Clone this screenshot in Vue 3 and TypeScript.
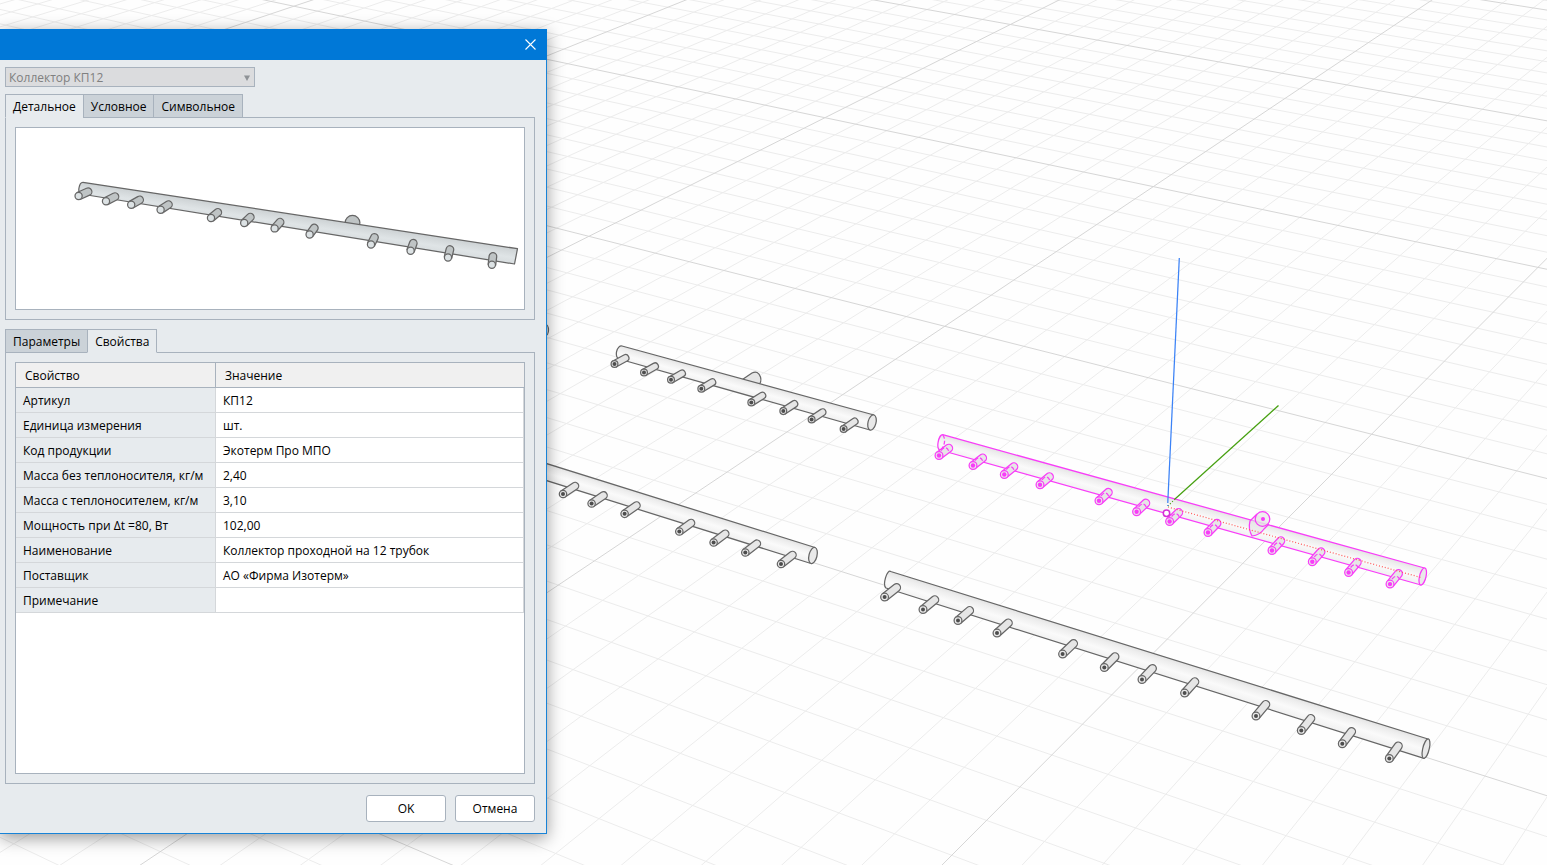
<script setup lang="ts">
import { ref } from 'vue'

type Point = [number, number]

interface Manifold {
  id: string
  topLeft: Point
  topRight: Point
  bottomRight: Point
  bottomLeft: Point
  capWidth: number
  radius: number
  firstOffset: Point
  lastOffset: Point
  tips: Point[]
}

interface Stub {
  x: number
  y: number
  d: string
}

/* Ground plane: the homography of a square patch of two major cells a side. */
function project(u: number, v: number): Point {
  const w = 1 - 0.1462 * u - 0.2404 * v
  return [(825 + 488.1 * u - 613.8 * v) / w, (117.7 + 110.6 * u + 180.5 * v) / w]
}

function gridPaths() {
  let minor = ''
  let major = ''
  const add = (i: number, a: Point, b: Point) => {
    const d = `M${a[0].toFixed(1)} ${a[1].toFixed(1)}L${b[0].toFixed(1)} ${b[1].toFixed(1)}`
    if (i % 10 === 0) major += d
    else minor += d
  }
  for (let i = -30; i <= 29; i++) add(i, project(i / 20, -1.2), project(i / 20, 1.9))
  for (let i = -24; i <= 36; i++) add(i, project(-1.6, i / 20), project(1.6, i / 20))
  return { minor, major }
}

const grid = gridPaths()

function bodyPath(m: Manifold): string {
  const half = Math.hypot(m.topLeft[0] - m.bottomLeft[0], m.topLeft[1] - m.bottomLeft[1]) / 2
  return `M${m.topLeft} L${m.topRight} L${m.bottomRight} L${m.bottomLeft} A${m.capWidth} ${half} 12 0 1 ${m.topLeft} Z`
}

function capPath(m: Manifold): string {
  const half = Math.hypot(m.topRight[0] - m.bottomRight[0], m.topRight[1] - m.bottomRight[1]) / 2
  const arc = `A${m.capWidth} ${half} 14 1 1`
  return `M${m.topRight} ${arc} ${m.bottomRight} ${arc} ${m.topRight}`
}

function stubs(m: Manifold): Stub[] {
  const start = m.tips[0][0]
  const span = m.tips[m.tips.length - 1][0] - start
  return m.tips.map(([x, y]) => {
    const t = (x - start) / span
    const ox = m.firstOffset[0] + (m.lastOffset[0] - m.firstOffset[0]) * t
    const oy = m.firstOffset[1] + (m.lastOffset[1] - m.firstOffset[1]) * t
    const len = Math.hypot(ox, oy)
    const nx = (oy / len) * m.radius
    const ny = (-ox / len) * m.radius
    const r = m.radius
    const d =
      `M${x + nx} ${y + ny}L${x + ox + nx} ${y + oy + ny}` +
      `A${r} ${r} 0 0 1 ${x + ox - nx} ${y + oy - ny}L${x - nx} ${y - ny}Z`
    return { x, y, d }
  })
}

/* Gradient axis across the pipe, from its upper edge to its lower edge. */
function axis(m: Manifold) {
  const dx = m.topRight[0] - m.topLeft[0]
  const dy = m.topRight[1] - m.topLeft[1]
  const len = Math.hypot(dx, dy)
  const h = Math.hypot(m.topRight[0] - m.bottomRight[0], m.topRight[1] - m.bottomRight[1])
  return {
    x1: m.topLeft[0],
    y1: m.topLeft[1],
    x2: m.topLeft[0] - (dy / len) * h,
    y2: m.topLeft[1] + (dx / len) * h,
  }
}

const grey: Manifold[] = [
  {
    id: 'kp8',
    topLeft: [622, 346], topRight: [874, 415], bottomRight: [870, 430], bottomLeft: [619, 359],
    capWidth: 4, radius: 3.4, firstOffset: [11, -6], lastOffset: [11, -7.5],
    tips: [[614.5, 364], [644, 372.5], [671, 379.8], [701.3, 388.8], [751.3, 402.5], [783.3, 411.1], [811.6, 419.5], [843.6, 429]],
  },
  {
    id: 'kp10',
    topLeft: [500, 449], topRight: [815, 547.5], bottomRight: [811, 563.5], bottomLeft: [500, 466],
    capWidth: 4, radius: 3.7, firstOffset: [12, -8], lastOffset: [11.5, -9],
    tips: [[563, 494], [591.6, 503.5], [624.6, 513.8], [679.3, 531.5], [713.6, 542.5], [745.3, 552.5], [781, 564]],
  },
  {
    id: 'kp12',
    topLeft: [890.7, 571.5], topRight: [1428, 739], bottomRight: [1424, 758.3], bottomLeft: [886, 588],
    capWidth: 3.2, radius: 3.9, firstOffset: [12, -9.5], lastOffset: [9, -12.5],
    tips: [[884.6, 597.1], [923, 609.5], [958, 620.5], [997, 633.1], [1062.6, 654.1], [1104.3, 667.5], [1142, 679.5], [1184.6, 693.1], [1256, 716.1], [1301.3, 730.5], [1342.3, 743.8], [1389.3, 758.5]],
  },
]

const selected: Manifold = {
  id: 'kp12-through',
  topLeft: [942.7, 434.7], topRight: [1424.5, 568], bottomRight: [1421, 585], bottomLeft: [940, 450],
  capWidth: 3.2, radius: 3.9, firstOffset: [9.7, -7.3], lastOffset: [8.5, -10.5],
  tips: [[939, 455.5], [973, 465.5], [1004.3, 474.5], [1040, 484.8], [1099, 500.8], [1136.6, 511.8], [1169.6, 521.5], [1208, 532.5], [1272, 550.5], [1312.3, 561.8], [1348.6, 572.5], [1390, 584.1]],
}

const preview: Manifold = {
  id: 'preview',
  topLeft: [83, 182.3], topRight: [517.5, 248.7], bottomRight: [514.5, 264], bottomLeft: [81, 194],
  capWidth: 3, radius: 3.8, firstOffset: [9.5, -4.3], lastOffset: [1, -8.3],
  tips: [[78.6, 196], [106, 201.2], [131.2, 204.7], [160.6, 209.7], [211, 218], [244.2, 223], [274.6, 228.4], [309.6, 234.5], [371, 244.5], [410.6, 250.8], [448, 257.4], [491.9, 264.7]],
}

const viewTabs = ['Детальное', 'Условное', 'Символьное']
const dataTabs = ['Параметры', 'Свойства']
const activeView = ref('Детальное')
const activeData = ref('Свойства')

const rows: [string, string][] = [
  ['Артикул', 'КП12'],
  ['Единица измерения', 'шт.'],
  ['Код продукции', 'Экотерм Про МПО'],
  ['Масса без теплоносителя, кг/м', '2,40'],
  ['Масса с теплоносителем, кг/м', '3,10'],
  ['Мощность при Δt =80, Вт', '102,00'],
  ['Наименование', 'Коллектор проходной на 12 трубок'],
  ['Поставщик', 'АО «Фирма Изотерм»'],
  ['Примечание', ''],
]
</script>

<template>
  <main class="workspace">
    <svg class="scene" viewBox="0 0 1547 865" preserveAspectRatio="xMinYMin slice" aria-hidden="true">
      <defs>
        <linearGradient
          v-for="m in [...grey, selected]"
          :id="m.id"
          :key="m.id"
          gradientUnits="userSpaceOnUse"
          v-bind="axis(m)"
        >
          <stop offset="0" stop-color="#e3e3e3" />
          <stop offset="0.2" stop-color="#eeeeee" />
          <stop offset="0.55" stop-color="#fafafa" />
          <stop offset="1" stop-color="#f0f0f0" />
        </linearGradient>
      </defs>
      <path class="grid-minor" :d="grid.minor" />
      <path class="grid-major" :d="grid.major" />

      <g class="part">
        <ellipse class="stub" cx="545" cy="330" rx="3.5" ry="6" />
        <path class="stub" d="M741.7 380 L752 373 Q758 370 760.5 377 Q762 382 758 386 Z" />
        <g v-for="m in grey" :key="m.id">
          <path :d="bodyPath(m)" :fill="`url(#${m.id})`" />
          <path class="cap" :d="capPath(m)" />
          <g v-for="s in stubs(m)" :key="s.x">
            <path class="stub" :d="s.d" />
            <circle class="tip" :cx="s.x" :cy="s.y" :r="m.radius" />
            <circle class="bore" :cx="s.x" :cy="s.y" r="2" />
          </g>
        </g>
      </g>

      <g class="part picked">
        <path :d="bodyPath(selected)" :fill="`url(#${selected.id})`" />
        <path class="cap" :d="capPath(selected)" />
        <path class="hidden-edge" d="M943 435 Q947 442 941 450" />
        <path class="outlet" d="M1257 514 L1250 521 Q1248 529 1252 536 Q1260 535 1264 529 L1269 524" />
        <circle class="outlet" cx="1262.5" cy="519" r="7.3" />
        <circle class="bore" cx="1263" cy="519" r="2" />
        <g v-for="s in stubs(selected)" :key="s.x">
          <path class="stub" :d="s.d" />
          <path class="hidden-edge" :d="`M${s.x + 2} ${s.y - 5}q5 -6 8 1`" />
          <circle class="tip" :cx="s.x" :cy="s.y" :r="selected.radius" />
          <circle class="bore" :cx="s.x" :cy="s.y" r="2.2" />
        </g>
      </g>

      <path class="axis-x" d="M1168 507 L1421 577.5" />
      <path class="axis-y" d="M1278.5 405.5 L1175 499" />
      <path class="axis-y dotted" d="M1175 499 L1168 506" />
      <path class="axis-z" d="M1179.3 258 L1167.8 502" />
      <path class="axis-z dotted" d="M1167.8 502 V507" />
      <circle class="origin" cx="1166.5" cy="513.3" r="3.2" />
    </svg>

    <section class="dialog" role="dialog" aria-label="Коллектор КП12">
      <header class="title-bar">
        <button class="close" type="button" aria-label="Закрыть">
          <svg width="11" height="11" viewBox="0 0 11 11"><path d="M0.5 0.5 L10.5 10.5 M10.5 0.5 L0.5 10.5" /></svg>
        </button>
      </header>

      <div class="content">
        <div class="style-picker">
          <select disabled aria-label="Стиль">
            <option>Коллектор КП12</option>
          </select>
          <svg class="arrow" width="6" height="6" viewBox="0 0 6 6"><path d="M0 0.5 H6 L3 6 Z" /></svg>
        </div>

        <div class="tabs" role="tablist">
          <button
            v-for="t in viewTabs"
            :key="t"
            type="button"
            role="tab"
            class="tab"
            :class="{ active: t === activeView }"
            :aria-selected="t === activeView"
            @click="activeView = t"
          >{{ t }}</button>
        </div>
        <div class="pane">
          <div class="preview">
            <svg viewBox="16 128 508 181" aria-hidden="true">
              <defs>
                <linearGradient id="preview" gradientUnits="userSpaceOnUse" v-bind="axis(preview)">
                  <stop offset="0" stop-color="#ccd1d3" />
                  <stop offset="0.3" stop-color="#d6dbdd" />
                  <stop offset="0.6" stop-color="#dfe4e6" />
                  <stop offset="1" stop-color="#d8dddf" />
                </linearGradient>
              </defs>
              <g class="part shaded">
                <circle class="stub" cx="352.5" cy="222.8" r="7.4" />
                <path :d="bodyPath(preview)" fill="url(#preview)" />
                <g v-for="s in stubs(preview)" :key="s.x">
                  <path class="stub" :d="s.d" />
                  <circle class="tip" :cx="s.x" :cy="s.y" r="3.6" />
                </g>
              </g>
            </svg>
          </div>
        </div>

        <div class="tabs lower" role="tablist">
          <button
            v-for="t in dataTabs"
            :key="t"
            type="button"
            role="tab"
            class="tab"
            :class="{ active: t === activeData }"
            :aria-selected="t === activeData"
            @click="activeData = t"
          >{{ t }}</button>
        </div>
        <div class="pane grow">
          <div class="sheet">
            <table>
              <thead>
                <tr><th scope="col" class="name">Свойство</th><th scope="col">Значение</th></tr>
              </thead>
              <tbody>
                <tr v-for="[name, value] in rows" :key="name">
                  <th scope="row">{{ name }}</th>
                  <td>{{ value }}</td>
                </tr>
              </tbody>
            </table>
          </div>
        </div>

        <footer class="actions">
          <button type="button">OK</button>
          <button type="button">Отмена</button>
        </footer>
      </div>
    </section>
  </main>
</template>

<style>
body {
  margin: 0;
}
</style>

<style scoped>
.workspace {
  position: relative;
  height: 100vh;
  overflow: hidden;
  background: #fefefe;
  color: #000;
  font: 12px/16px "Segoe UI", "Open Sans", "Noto Sans", sans-serif;
}
.scene {
  display: block;
  width: 100%;
  height: 100%;
}
.grid-minor,
.grid-major {
  fill: none;
  stroke: #ececec;
}
.grid-major {
  stroke: #d6d6d6;
}
.part path,
.part circle,
.part ellipse {
  stroke: #666;
  stroke-width: 1.25;
  stroke-linejoin: round;
}
.part .cap {
  fill: #e9e9e9;
}
.part .stub {
  fill: #e6e6e6;
}
.part .tip {
  fill: #e9e9e9;
}
.part .bore {
  fill: #4d4d4d;
  stroke: none;
}
.picked path,
.picked circle {
  stroke: #f83df8;
}
.picked .bore {
  fill: #f83df8;
}
.picked .outlet {
  fill: #e4e4e4;
  fill-opacity: 0.6;
}
.picked .hidden-edge {
  fill: none;
  stroke-dasharray: 4 2;
}
.shaded .stub {
  fill: #bfc4c5;
}
.shaded .tip {
  fill: #dce2e4;
}
.axis-x,
.axis-y,
.axis-z {
  fill: none;
  stroke-width: 1.25;
}
.axis-x {
  stroke: #ff5a5a;
  stroke-dasharray: 1 2;
}
.axis-y {
  stroke: #46a010;
}
.axis-z {
  stroke: #3b82f6;
}
.dotted {
  stroke-dasharray: 1 2;
}
.origin {
  fill: #fff;
  stroke: #d52fd5;
  stroke-width: 1.5;
}

.dialog {
  position: absolute;
  top: 29px;
  left: 0;
  display: flex;
  flex-direction: column;
  box-sizing: border-box;
  width: 547px;
  height: 805px;
  border: solid #1883d7;
  border-width: 0 1px 1px 0;
  background: #e7ebee;
  box-shadow: 0 4px 16px rgba(0, 0, 0, 0.4);
}
.title-bar {
  display: flex;
  flex: none;
  justify-content: flex-end;
  height: 31px;
  margin-right: -1px;
  background: #0078d7;
}
.close {
  display: flex;
  align-items: center;
  padding: 0 11px 1px;
  border: 0;
  background: none;
}
.close path {
  stroke: #fff;
  stroke-width: 1.1;
}
.content {
  display: flex;
  flex: 1;
  flex-direction: column;
  padding: 7px 11px 11px 5px;
}
.style-picker {
  position: relative;
  width: 250px;
  margin-bottom: 7px;
}
.style-picker select {
  display: block;
  box-sizing: border-box;
  width: 100%;
  height: 20px;
  padding: 2px 3px 0;
  border: 1px solid #a8b2bd;
  border-radius: 0;
  background: #dbdcde;
  color: #808080;
  font: inherit;
  opacity: 1;
  appearance: none;
}
.arrow {
  position: absolute;
  top: 8px;
  right: 5px;
  fill: #8e9296;
}
.tabs {
  display: flex;
  position: relative;
  z-index: 1;
  margin-bottom: -1px;
}
.lower {
  margin-top: 9px;
}
.tab {
  box-sizing: border-box;
  height: 24px;
  margin-right: -1px;
  padding: 2px 7px 0;
  border: 1px solid #a8b2bd;
  background: #cbd2d8;
  color: #000;
  font: inherit;
}
.tab.active {
  border-bottom-color: #e7ebee;
  background: #e7ebee;
}
.pane {
  padding: 9px;
  border: 1px solid #a8b2bd;
}
.preview,
.sheet {
  border: 1px solid #a8b2bd;
  background: #fff;
}
.preview svg {
  display: block;
  width: 100%;
}
.grow {
  display: flex;
  flex: 1;
}
.sheet {
  flex: 1;
}
table {
  width: 100%;
  border-spacing: 0;
  table-layout: fixed;
}
th,
td {
  box-sizing: border-box;
  height: 25px;
  padding: 2px 7px 0;
  border: solid #d4d7da;
  border-width: 0 1px 1px 0;
  font-weight: 400;
  text-align: left;
}
thead th {
  padding: 2px 9px 0;
  border-color: #a8b2bd;
  background: #f0f0f0;
}
thead th:last-child {
  border-right: 0;
}
.name {
  width: 200px;
}
tbody th {
  background: #e7ebee;
}
.actions {
  display: flex;
  justify-content: flex-end;
  gap: 9px;
  margin-top: 11px;
}
.actions button {
  box-sizing: border-box;
  width: 80px;
  height: 27px;
  border: 1px solid #a8b2bd;
  border-radius: 3px;
  background: #fff;
  color: #000;
  font: inherit;
}
</style>
